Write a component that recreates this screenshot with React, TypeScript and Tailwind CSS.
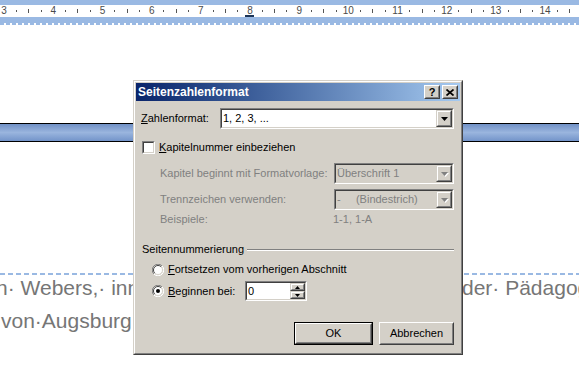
import React from 'react';

// Klassische Windows-Farben
// Fläche #d4d0c8, Schatten #808080, dunkler Schatten #404040

function Ruler() {
  const nums = [3, 4, 5, 6, 7, 8, 9, 10, 11, 12, 13, 14];
  return (
    <div className="h-[25px] bg-[#9ab9e3] pt-[5px]">
      <div className="h-[12px] bg-white flex overflow-hidden">
        <div className="flex ml-[-2px] shrink-0">
          {nums.map((n) => (
            <div key={n} className="w-[49.18px] h-[12px] shrink-0 flex">
              <div className="relative w-[12.3px] flex items-center justify-center text-[10px] leading-none text-[#4a4a4a]">
                {n}
                {n === 8 && (
                  <div className="absolute bottom-0 left-[1px] w-[9px] h-[2px] bg-[#1c3557]" />
                )}
              </div>
              <div className="w-[12.3px] flex items-center justify-center">
                <div className="w-px h-[2px] bg-[#555]" />
              </div>
              <div className="w-[12.3px] flex items-center justify-center">
                <div className="w-px h-[4px] bg-[#555]" />
              </div>
              <div className="w-[12.3px] flex items-center justify-center">
                <div className="w-px h-[2px] bg-[#555]" />
              </div>
            </div>
          ))}
        </div>
      </div>
      <div className="h-[6px]" />
      <div className="h-[2px] bg-white bg-[repeating-linear-gradient(90deg,#9ab9e3_0_4px,#ffffff_4px_6px)]" />
    </div>
  );
}

function Arrow({ disabled = false }: { disabled?: boolean }) {
  return (
    <svg width="8" height="5" viewBox="0 0 8 5">
      {disabled && <path d="M1 1h7l-3.5 4z" fill="#ffffff" />}
      <path d="M0 0h7l-3.5 4z" fill={disabled ? '#808080' : '#000000'} />
    </svg>
  );
}

function DropBtn({ disabled = false }: { disabled?: boolean }) {
  return (
    <div className="w-[16px] h-[17px] shrink-0 border border-t-[#d4d0c8] border-l-[#d4d0c8] border-r-[#404040] border-b-[#404040]">
      <div className="h-full border border-t-white border-l-white border-r-[#808080] border-b-[#808080] bg-[#d4d0c8] flex items-center justify-center pl-px pt-px">
        <Arrow disabled={disabled} />
      </div>
    </div>
  );
}

function Combo({ w, text, disabled = false }: { w: string; text: string; disabled?: boolean }) {
  return (
    <div className={`h-[21px] shrink-0 border border-t-[#808080] border-l-[#808080] border-b-white border-r-white ${w}`}>
      <div
        className={`h-full border border-t-[#404040] border-l-[#404040] border-b-[#d4d0c8] border-r-[#d4d0c8] flex items-center ${
          disabled ? 'bg-[#d4d0c8] text-[#808080]' : 'bg-white text-black'
        }`}
      >
        <span className="flex-1 pl-px whitespace-pre">{text}</span>
        <DropBtn disabled={disabled} />
      </div>
    </div>
  );
}

function Radio({ checked = false }: { checked?: boolean }) {
  return (
    <svg width="12" height="12" viewBox="0 0 12 12" className="shrink-0">
      <circle cx="6" cy="6" r="5" fill="#ffffff" />
      <path d="M1.9 10.1A5.5 5.5 0 0 1 10.1 1.9" fill="none" stroke="#808080" />
      <path d="M10.1 1.9A5.5 5.5 0 0 1 1.9 10.1" fill="none" stroke="#ffffff" />
      <path d="M2.8 9.2A4.5 4.5 0 0 1 9.2 2.8" fill="none" stroke="#404040" />
      <path d="M9.2 2.8A4.5 4.5 0 0 1 2.8 9.2" fill="none" stroke="#d4d0c8" />
      {checked && <circle cx="6" cy="6" r="2" fill="#000000" />}
    </svg>
  );
}

function Button({ label, isDefault = false, w }: { label: string; isDefault?: boolean; w: string }) {
  const inner = (
    <div className="h-full border border-t-white border-l-white border-r-[#404040] border-b-[#404040]">
      <div className="h-full border border-t-[#d4d0c8] border-l-[#d4d0c8] border-r-[#808080] border-b-[#808080] bg-[#d4d0c8] flex items-center justify-center">
        {label}
      </div>
    </div>
  );
  return (
    <div className={`h-[23px] ${w} ${isDefault ? 'border border-black' : ''}`}>{inner}</div>
  );
}

function TitleBtn({ children }: { children: React.ReactNode }) {
  return (
    <div className="w-[16px] h-[14px] border border-t-white border-l-white border-r-[#404040] border-b-[#404040]">
      <div className="h-full border border-t-[#d4d0c8] border-l-[#d4d0c8] border-r-[#808080] border-b-[#808080] bg-[#d4d0c8] flex items-center justify-center">
        {children}
      </div>
    </div>
  );
}

function Dialog() {
  return (
    <div className="absolute left-[133px] top-[80px] w-[330px] h-[275px] border border-t-[#d4d0c8] border-l-[#d4d0c8] border-r-[#404040] border-b-[#404040] bg-[#d4d0c8]">
      <div className="h-full border border-t-white border-l-white border-r-[#808080] border-b-[#808080] p-px flex flex-col">
        {/* Titelleiste */}
        <div className="h-[18px] shrink-0 bg-linear-to-r from-[#0a246a] to-[#a6caf0] flex items-center pl-[2px] pr-[2px]">
          <span className="flex-1 text-white font-bold text-[12px] leading-none">Seitenzahlenformat</span>
          <div className="flex gap-[2px]">
            <TitleBtn>
              <span className="text-[11px] font-bold leading-none text-black">?</span>
            </TitleBtn>
            <TitleBtn>
              <svg width="8" height="7" viewBox="0 0 8 7">
                <path d="M0.5 0.5L7.5 6.5M7.5 0.5L0.5 6.5" stroke="#000000" strokeWidth="1.7" />
              </svg>
            </TitleBtn>
          </div>
        </div>

        <div className="px-[6px] flex flex-col text-[11px] text-black leading-none">
          {/* Zahlenformat */}
          <div className="mt-[7px] h-[21px] flex items-center">
            <span className="ml-[-1px]">
              <span className="underline">Z</span>ahlenformat:
            </span>
            <div className="ml-auto">
              <Combo w="w-[234px]" text="1, 2, 3, ..." />
            </div>
          </div>

          {/* Kapitelnummer */}
          <div className="mt-[12px] h-[13px] flex items-center">
            <div className="w-[13px] h-[13px] border border-t-[#808080] border-l-[#808080] border-b-white border-r-white">
              <div className="h-full border border-t-[#404040] border-l-[#404040] border-b-[#d4d0c8] border-r-[#d4d0c8] bg-white" />
            </div>
            <span className="ml-[4px]">
              <span className="underline">K</span>apitelnummer einbeziehen
            </span>
          </div>

          <div className="mt-[9px] h-[21px] flex items-center pl-[18px] text-[#808080]">
            <span>Kapitel beginnt mit Formatvorlage:</span>
            <div className="ml-auto">
              <Combo w="w-[120px]" text="Überschrift 1" disabled />
            </div>
          </div>

          <div className="mt-[5px] h-[21px] flex items-center pl-[18px] text-[#808080]">
            <span>Trennzeichen verwenden:</span>
            <div className="ml-auto">
              <Combo w="w-[120px]" text={'-     (Bindestrich)'} disabled />
            </div>
          </div>

          <div className="mt-[3px] h-[13px] flex items-center pl-[18px] text-[#808080]">
            <span className="w-[173px] shrink-0">Beispiele:</span>
            <span>1-1, 1-A</span>
          </div>

          {/* Seitennummerierung */}
          <div className="mt-[17px] h-[13px] flex items-center">
            <span>Seitennummerierung</span>
            <div className="flex-1 ml-[3px] flex flex-col">
              <div className="h-px bg-[#808080]" />
              <div className="h-px bg-white" />
            </div>
          </div>

          <div className="mt-[7px] h-[13px] flex items-center pl-[10px]">
            <Radio />
            <span className="ml-[4px]">
              <span className="underline">F</span>ortsetzen vom vorherigen Abschnitt
            </span>
          </div>

          <div className="mt-[5px] h-[20px] flex items-center pl-[10px]">
            <Radio checked />
            <span className="ml-[4px] w-[77px] shrink-0">
              <span className="underline">B</span>eginnen bei:
            </span>
            <div className="w-[62px] h-[20px] border border-t-[#808080] border-l-[#808080] border-b-white border-r-white">
              <div className="h-full border border-t-[#404040] border-l-[#404040] border-b-[#d4d0c8] border-r-[#d4d0c8] bg-white flex items-center">
                <span className="flex-1 pl-px">0</span>
                <div className="w-[15px] h-full flex flex-col">
                  <div className="h-[8px] border border-t-[#d4d0c8] border-l-[#d4d0c8] border-r-[#404040] border-b-[#404040]">
                    <div className="h-full border border-t-white border-l-white border-r-[#808080] border-b-[#808080] bg-[#d4d0c8] flex items-center justify-center">
                      <svg width="5" height="3" viewBox="0 0 5 3">
                        <path d="M2.5 0L5 3H0z" fill="#000000" />
                      </svg>
                    </div>
                  </div>
                  <div className="h-[8px] border border-t-[#d4d0c8] border-l-[#d4d0c8] border-r-[#404040] border-b-[#404040]">
                    <div className="h-full border border-t-white border-l-white border-r-[#808080] border-b-[#808080] bg-[#d4d0c8] flex items-center justify-center">
                      <svg width="5" height="3" viewBox="0 0 5 3">
                        <path d="M0 0h5L2.5 3z" fill="#000000" />
                      </svg>
                    </div>
                  </div>
                </div>
              </div>
            </div>
          </div>

          {/* Schaltflächen */}
          <div className="mt-[21px] flex justify-end gap-[6px]">
            <Button label="OK" isDefault w="w-[79px]" />
            <Button label="Abbrechen" w="w-[75px]" />
          </div>
        </div>
      </div>
    </div>
  );
}

export default function App() {
  return (
    <div className="relative w-[579px] h-[379px] overflow-hidden bg-white font-['Liberation_Sans',Arial,sans-serif]">
      <Ruler />

      {/* Blaue Kopfzeilen-Trennlinie */}
      <div className="mt-[98px] h-[19px] border-y border-black bg-linear-to-b from-[#7191c6] via-[#9ab5de] to-[#7394c9]" />

      {/* gestrichelte Linie */}
      <div className="mt-[131px] h-[2px] bg-[repeating-linear-gradient(90deg,#9ab9e3_0_5px,#ffffff_5px_8px)]" />

      {/* Dokumenttext */}
      <div className="text-[21px] text-[#767676] whitespace-nowrap">
        <div className="flex leading-[24px] mt-px">
          <span className="w-[466px] shrink-0 overflow-hidden ml-[-4px]">n· Webers,· inn</span>
          <span>der· Pädagog</span>
        </div>
        <div className="leading-[24px] mt-[9px] pl-px">von·Augsburg</div>
      </div>

      <Dialog />
    </div>
  );
}
